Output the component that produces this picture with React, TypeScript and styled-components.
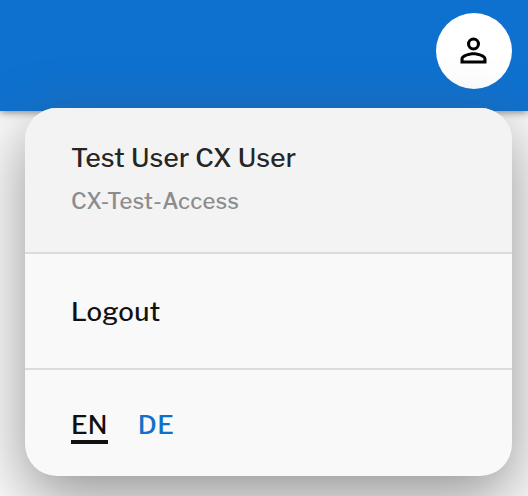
import React from "react";
import styled, { createGlobalStyle } from "styled-components";

const Global = createGlobalStyle`
  * { box-sizing: border-box; }
  body {
    margin: 0;
    background: #fafafa;
    overflow: hidden;
    font-family: "Libre Franklin", "Inter", sans-serif;
  }
`;

const Page = styled.div`
  position: relative;
  height: 496px;
  overflow: hidden;
`;

const Header = styled.header`
  height: 111px;
  background: #0f71cf;
  display: flex;
  justify-content: flex-end;
  align-items: flex-start;
  padding: 13px 16.5px 0 0;
  box-shadow: 0 1px 8px rgba(0, 0, 0, 0.5);
`;

const Avatar = styled.button`
  width: 76px;
  height: 76px;
  border: 0;
  border-radius: 50%;
  background: #fff;
  display: grid;
  place-items: center;
  padding: 0 0 1px;
`;

const Menu = styled.div`
  position: absolute;
  left: 25px;
  top: 108px;
  width: 486.5px;
  height: 368px;
  border-radius: 32px;
  background: #f9f9f9;
  box-shadow: 0 20px 60px rgba(80, 80, 80, 0.6);
`;

const Section = styled.section<{ $height: number; $top: number; $last?: boolean }>`
  height: ${(p) => p.$height}px;
  padding: ${(p) => p.$top}px 46px 0;
  border-bottom: ${(p) => (p.$last ? "0" : "2px solid #dcdcdc")};
`;

const User = styled(Section)`
  background: #f3f3f3;
  border-radius: 32px 32px 0 0;
`;

const Name = styled.div`
  font-size: 26px;
  line-height: 34px;
  font-weight: 500;
  letter-spacing: 0.3px;
  color: #252525;
`;

const Company = styled.div`
  font-size: 22px;
  line-height: 30px;
  margin-top: 11px;
  font-weight: 500;
  letter-spacing: 0.42px;
  color: #8c8c8c;
`;

const Logout = styled(Name)`
  letter-spacing: 0.4px;
  color: #111;
`;

const Langs = styled(Section)`
  display: flex;
  align-items: flex-start;
  gap: 30px;
`;

const Lang = styled.span<{ $on?: boolean }>`
  font-size: 26px;
  line-height: 34px;
  height: 36px;
  font-weight: 500;
  letter-spacing: 0.3px;
  color: ${(p) => (p.$on ? "#111" : "#0f71cb")};
  border-bottom: ${(p) => (p.$on ? "4px solid #111" : "0")};
`;

export default function App() {
  return (
    <Page>
      <Global />
      <Header>
        <Avatar aria-label="Account">
          <svg width="39" height="39" viewBox="0 0 24 24">
            <path d="M12 5.9a2.1 2.1 0 110 4.2 2.1 2.1 0 010-4.2m0 9c2.97 0 6.1 1.46 6.1 2.1v1.1H5.9V17c0-.64 3.13-2.1 6.1-2.1M12 4a4 4 0 100 8 4 4 0 000-8m0 9c-2.67 0-8 1.34-8 4v3h16v-3c0-2.66-5.33-4-8-4" />
          </svg>
        </Avatar>
      </Header>
      <Menu>
        <User $height={146} $top={33}>
          <Name>Test User CX User</Name>
          <Company>CX-Test-Access</Company>
        </User>
        <Section $height={116} $top={41}>
          <Logout>Logout</Logout>
        </Section>
        <Langs $height={106} $top={38} $last>
          <Lang $on>EN</Lang>
          <Lang>DE</Lang>
        </Langs>
      </Menu>
    </Page>
  );
}
